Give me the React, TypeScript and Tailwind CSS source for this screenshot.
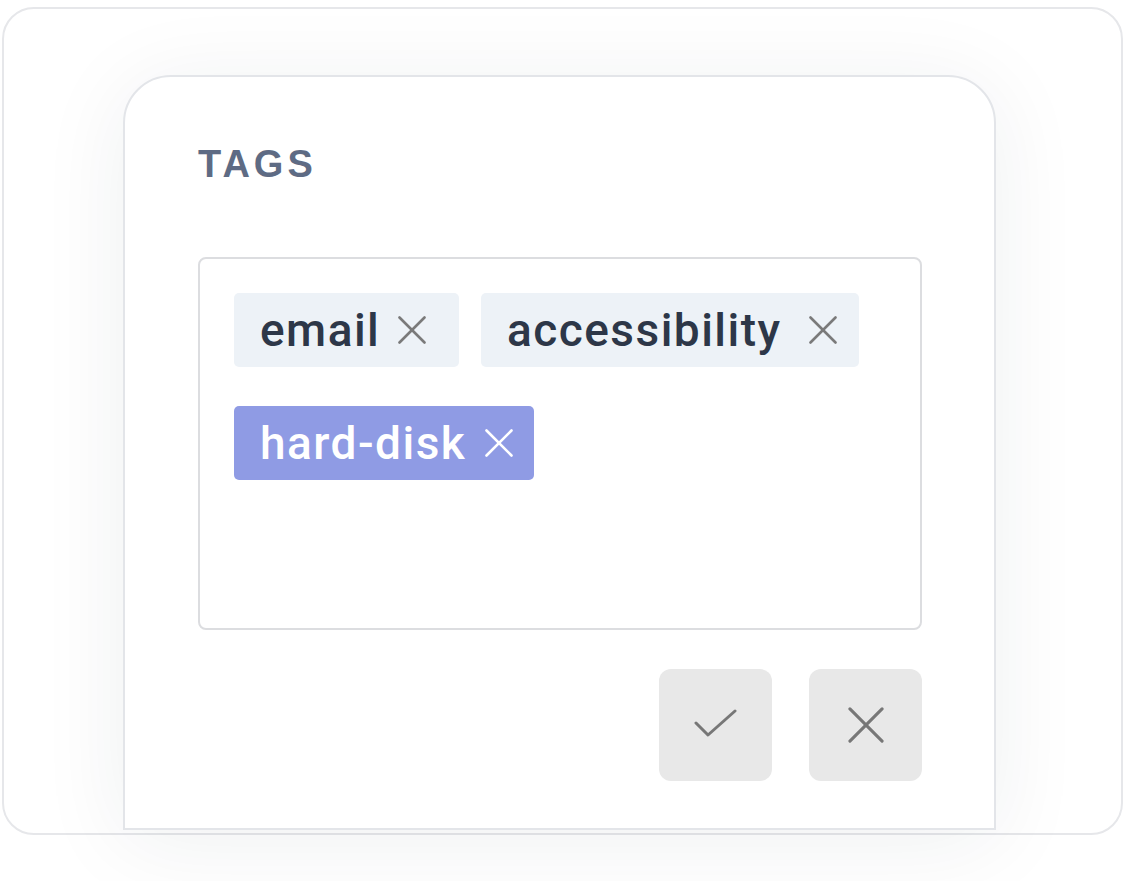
import React from "react";

function XIcon({ color, size = 28, sw = 2.6 }: { color: string; size?: number; sw?: number }) {
  return (
    <svg width={size} height={size} viewBox="0 0 28 28" fill="none">
      <line x1="1.5" y1="1.5" x2="26.5" y2="26.5" stroke={color} strokeWidth={sw} strokeLinecap="round" />
      <line x1="26.5" y1="1.5" x2="1.5" y2="26.5" stroke={color} strokeWidth={sw} strokeLinecap="round" />
    </svg>
  );
}

function Chip({ label, active, w, gap }: { label: string; active?: boolean; w: string; gap: string }) {
  return (
    <div
      className={
        "flex h-[74px] items-center rounded-[5px] pl-[26px] " +
        w +
        " " +
        (active ? "bg-[#8f9be4] text-white" : "bg-[#edf2f7] text-[#2d3748]")
      }
    >
      <span className="font-['Roboto',sans-serif] text-[46px] font-medium leading-none tracking-[0.032em]">{label}</span>
      <span className={"flex " + gap}>
        <XIcon color={active ? "#ffffff" : "#7a7a7a"} />
      </span>
    </div>
  );
}

export default function App() {
  return (
    <div className="h-[881px] w-[1125px] overflow-hidden bg-white pl-[2px] pt-[7px]">
      <div className="h-[828px] w-[1121px] rounded-[32px] border-2 border-[#e6e7ea] bg-white pl-[119px] pt-[66px]">
        <div className="h-[755px] w-[873px] rounded-t-[48px] border-2 border-[#e3e5e9] bg-white pl-[73px] pr-[73px] pt-[68px] shadow-[0_10px_90px_rgba(30,41,59,0.07)]">
          <div className="font-['Liberation_Sans',Arial,sans-serif] text-[38px] font-bold leading-none tracking-[4px] text-[#5e6b84]">
            TAGS
          </div>
          <div className="mt-[74px] h-[373px] w-[724px] rounded-[8px] border-2 border-[#dcdde0] p-[34px]">
            <div className="flex flex-wrap gap-x-[22px] gap-y-[39px]">
              <Chip label="email" w="w-[225px]" gap="ml-[18px]" />
              <Chip label="accessibility" w="w-[378px]" gap="ml-[27px]" />
              <Chip label="hard-disk" active w="w-[300px]" gap="ml-[19px]" />
            </div>
          </div>
          <div className="mt-[39px] flex w-[724px] justify-end gap-[37px]">
            <button className="flex h-[112px] w-[113px] items-center justify-center rounded-[12px] bg-[#e8e8e8]">
              <svg width="44" height="34" viewBox="0 0 44 34" fill="none">
                <polyline points="2,15 14,27 41,3" stroke="#777777" strokeWidth="3" strokeLinecap="round" strokeLinejoin="round" />
              </svg>
            </button>
            <button className="flex h-[112px] w-[113px] items-center justify-center rounded-[12px] bg-[#e8e8e8]">
              <XIcon color="#777777" size={36} sw={2.4} />
            </button>
          </div>
        </div>
      </div>
    </div>
  );
}
